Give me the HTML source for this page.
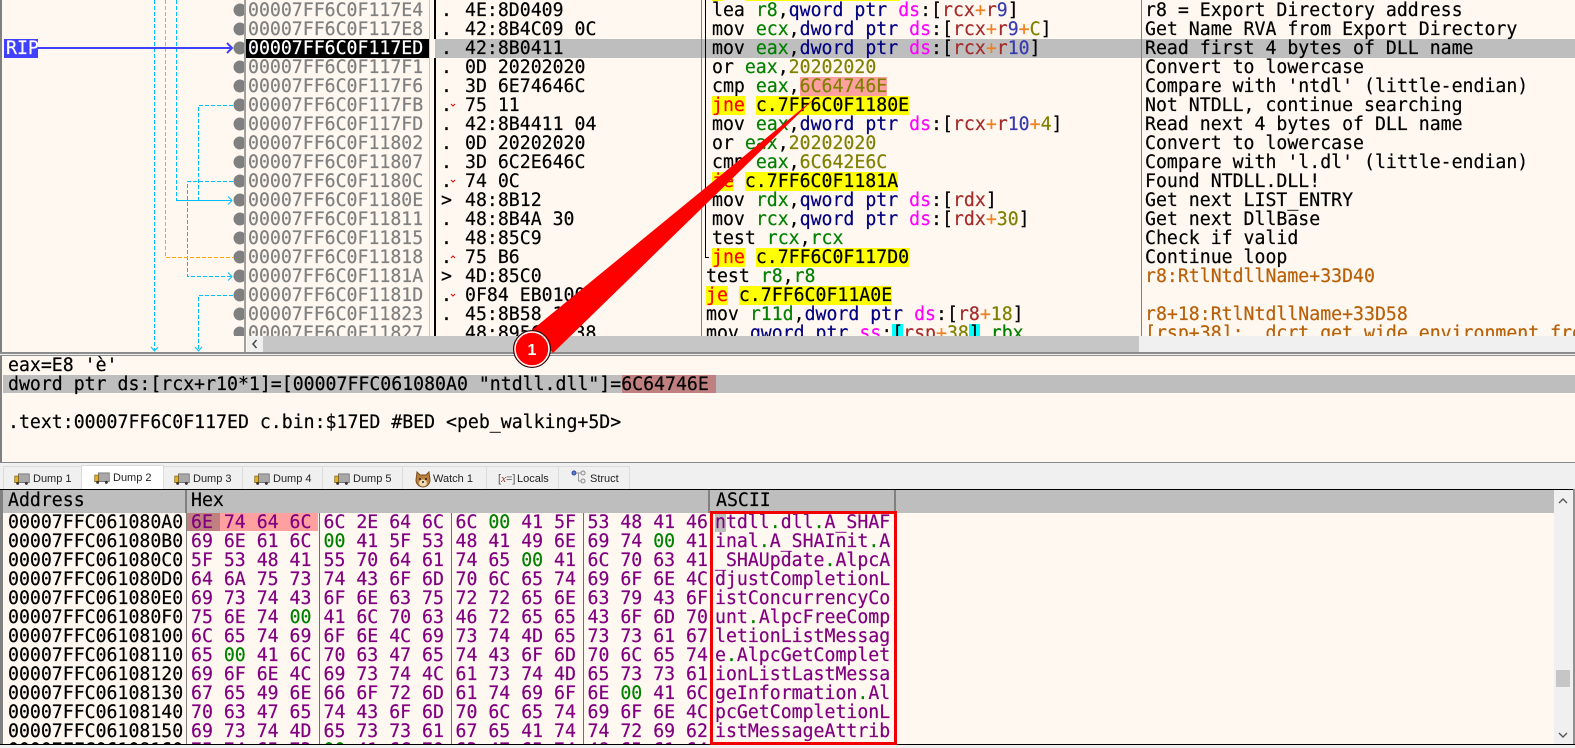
<!DOCTYPE html>
<html><head><meta charset="utf-8"><style>
html,body{margin:0;padding:0;width:1575px;height:748px;overflow:hidden;background:#FFF8F0}
#p{position:relative;width:1575px;height:748px;overflow:hidden;background:#FFF8F0;font:18.2px/19px "DejaVu Sans Mono",monospace;color:#000}
.a{position:absolute}
.col{position:absolute;white-space:normal;-webkit-text-stroke:.2px}
.col div{height:19px;line-height:19px;white-space:pre}
.g{color:#008000}.n{color:#000080}.m{color:#f0f}.b{color:#a52a2a}.o{color:#f08020}.l{color:#808000}.v{color:#3a3ab0}.r{color:#f00}
.y{display:inline-block;height:19px;background:#ff0;vertical-align:top}
.h{display:inline-block;height:19px;background:#ffa0a0;color:#808000;vertical-align:top}
.c{display:inline-block;height:19px;background:#0ff;vertical-align:top}
.t{position:absolute;top:466px;height:23px;background:#f0f0f0;border:1px solid #dcdcdc;border-bottom:0;box-sizing:border-box;font:11px/25px "Liberation Sans",sans-serif;color:#222}
.t span{position:absolute;white-space:pre}
.t svg{position:absolute;top:5px}
.p{color:#800080}.p i{color:#008000;font-style:normal}
</style></head><body><div id="p">

<!-- backgrounds -->
<div class="a" style="left:435px;top:39px;width:1140px;height:19px;background:#bebebe"></div>
<div class="a" style="left:246px;top:39px;width:183px;height:19px;background:#000"></div>
<div class="a" style="left:4px;top:39px;width:34px;height:19px;background:#4040ff"></div>
<div class="a" style="left:0;top:0;width:2px;height:353px;background:#808080"></div>
<div class="a" style="left:244px;top:0;width:2px;height:353px;background:#a0a0a0"></div>
<div class="a" style="left:429px;top:0;width:1px;height:336px;background:#c8c8c8"></div>
<div class="a" style="left:434px;top:0;width:2px;height:39px;background:#000"></div>
<div class="a" style="left:434px;top:58px;width:2px;height:278px;background:#000"></div>
<div class="a" style="left:701px;top:0;width:1px;height:336px;background:#808080"></div>
<div class="a" style="left:1141px;top:0;width:1px;height:336px;background:#808080"></div>
<div class="a" style="left:705px;top:0;width:1px;height:258px;background:#000"></div>
<div class="a" style="left:705px;top:257px;width:4px;height:1px;background:#000"></div>
<div class="a" style="left:712px;top:0;width:11px;height:1px;background:#ff0"></div>
<div class="a" style="left:745px;top:0;width:155px;height:1px;background:#ff0"></div>

<!-- upper table text -->
<div class="a" style="left:0;top:0;width:1575px;height:336px;overflow:hidden">
<div class="col" style="left:6px;top:39px;color:#fff"><div>RIP</div></div>
<div class="col" style="left:248px;top:1px;color:#808080"><div>00007FF6C0F117E4</div><div>00007FF6C0F117E8</div><div style="color:#fff">00007FF6C0F117ED</div><div>00007FF6C0F117F1</div><div>00007FF6C0F117F6</div><div>00007FF6C0F117FB</div><div>00007FF6C0F117FD</div><div>00007FF6C0F11802</div><div>00007FF6C0F11807</div><div>00007FF6C0F1180C</div><div>00007FF6C0F1180E</div><div>00007FF6C0F11811</div><div>00007FF6C0F11815</div><div>00007FF6C0F11818</div><div>00007FF6C0F1181A</div><div>00007FF6C0F1181D</div><div>00007FF6C0F11823</div><div>00007FF6C0F11827</div></div>
<div class="col" style="left:441px;top:1px"><div>.</div><div>.</div><div>.</div><div>.</div><div>.</div><div>.</div><div>.</div><div>.</div><div>.</div><div>.</div><div>&gt;</div><div>.</div><div>.</div><div>.</div><div>&gt;</div><div>.</div><div>.</div><div>.</div></div>
<div class="col" style="left:465px;top:1px"><div>4E:8D0409</div><div>42:8B4C09 0C</div><div>42:8B0411</div><div>0D 20202020</div><div>3D 6E74646C</div><div>75 11</div><div>42:8B4411 04</div><div>0D 20202020</div><div>3D 6C2E646C</div><div>74 0C</div><div>48:8B12</div><div>48:8B4A 30</div><div>48:85C9</div><div>75 B6</div><div>4D:85C0</div><div>0F84 EB010000</div><div>45:8B58 18</div><div>48:895C24 38</div></div>
<div class="col" style="left:712px;top:1px">
<div>lea <span class="g">r8</span>,<span class="n">qword ptr</span> <span class="m">ds</span>:[<span class="b">rcx</span><span class="o">+</span><span class="b">r</span><span class="v">9</span>]</div>
<div>mov <span class="g">ecx</span>,<span class="n">dword ptr</span> <span class="m">ds</span>:[<span class="b">rcx</span><span class="o">+</span><span class="b">r</span><span class="v">9</span><span class="o">+</span><span class="l">C</span>]</div>
<div>mov <span class="g">eax</span>,<span class="n">dword ptr</span> <span class="m">ds</span>:[<span class="b">rcx</span><span class="o">+</span><span class="b">r</span><span class="v">10</span>]</div>
<div>or <span class="g">eax</span>,<span class="l">20202020</span></div>
<div>cmp <span class="g">eax</span>,<span class="h">6C64746E</span></div>
<div><span class="y r">jne</span> <span class="y">c.7FF6C0F1180E</span></div>
<div>mov <span class="g">eax</span>,<span class="n">dword ptr</span> <span class="m">ds</span>:[<span class="b">rcx</span><span class="o">+</span><span class="b">r</span><span class="v">10</span><span class="o">+</span><span class="l">4</span>]</div>
<div>or <span class="g">eax</span>,<span class="l">20202020</span></div>
<div>cmp <span class="g">eax</span>,<span class="l">6C642E6C</span></div>
<div><span class="y r">je</span> <span class="y">c.7FF6C0F1181A</span></div>
<div>mov <span class="g">rdx</span>,<span class="n">qword ptr</span> <span class="m">ds</span>:[<span class="b">rdx</span>]</div>
<div>mov <span class="g">rcx</span>,<span class="n">qword ptr</span> <span class="m">ds</span>:[<span class="b">rdx</span><span class="o">+</span><span class="l">30</span>]</div>
<div>test <span class="g">rcx</span>,<span class="g">rcx</span></div>
<div><span class="y r">jne</span> <span class="y">c.7FF6C0F117D0</span></div>
</div>
<div class="col" style="left:706px;top:267px">
<div>test <span class="g">r8</span>,<span class="g">r8</span></div>
<div><span class="y r">je</span> <span class="y">c.7FF6C0F11A0E</span></div>
<div>mov <span class="g">r11d</span>,<span class="n">dword ptr</span> <span class="m">ds</span>:[<span class="b">r8</span><span class="o">+</span><span class="l">18</span>]</div>
<div>mov <span class="n">qword ptr</span> <span class="m">ss</span>:<span class="c">[</span><span class="b">rsp</span><span class="o">+</span><span class="l">38</span><span class="c">]</span>,<span class="g">rbx</span></div>
</div>
<div class="col" style="left:1145px;top:1px">
<div>r8 = Export Directory address</div>
<div>Get Name RVA from Export Directory</div>
<div>Read first 4 bytes of DLL name</div>
<div>Convert to lowercase</div>
<div>Compare with 'ntdl' (little-endian)</div>
<div>Not NTDLL, continue searching</div>
<div>Read next 4 bytes of DLL name</div>
<div>Convert to lowercase</div>
<div>Compare with 'l.dl' (little-endian)</div>
<div>Found NTDLL.DLL!</div>
<div>Get next LIST_ENTRY</div>
<div>Get next DllBase</div>
<div>Check if valid</div>
<div>Continue loop</div>
<div style="color:#b86008">r8:RtlNtdllName+33D40</div>
<div></div>
<div style="color:#b86008">r8+18:RtlNtdllName+33D58</div>
<div style="color:#b86008">[rsp+38]:__dcrt_get_wide_environment_from_os+14C</div>
</div>
</div>

<!-- graph -->
<svg class="a" style="left:0;top:0" width="460" height="356" fill="none">
<clipPath id="cg"><rect x="0" y="0" width="244" height="336"/></clipPath>
<g clip-path="url(#cg)" fill="#808080">
<circle cx="240" cy="10" r="6.5"/><circle cx="240" cy="29" r="6.5"/><circle cx="240" cy="48" r="6.5"/><circle cx="240" cy="67" r="6.5"/><circle cx="240" cy="86" r="6.5"/><circle cx="240" cy="105" r="6.5"/><circle cx="240" cy="124" r="6.5"/><circle cx="240" cy="143" r="6.5"/><circle cx="240" cy="162" r="6.5"/><circle cx="240" cy="181" r="6.5"/><circle cx="240" cy="200" r="6.5"/><circle cx="240" cy="219" r="6.5"/><circle cx="240" cy="238" r="6.5"/><circle cx="240" cy="257" r="6.5"/><circle cx="240" cy="276" r="6.5"/><circle cx="240" cy="295" r="6.5"/><circle cx="240" cy="314" r="6.5"/><circle cx="240" cy="333" r="6.5"/></g>
<g stroke="#00bfff" stroke-width="1" stroke-dasharray="4 2">
<path d="M154.5 0V350"/><path d="M176.5 0V200.5"/><path d="M233 105.5H198.5V200"/><path d="M233 181.5H187.5V276.5H231"/><path d="M233 295.5H198.500V350"/>
</g>
<path d="M165.5 0V257.5H233" stroke="#ffa500" stroke-dasharray="4 2"/>
<path d="M176 200.5H232M228 196.5l4 4-4 4M228 272.5l4 4-4 4M151 347l3.500 4 3.500-4M195 347l3.500 4 3.500-4" stroke="#00bfff"/>
<path d="M38 48H231M227 43l5 5-5 5" stroke="#4040ff" stroke-width="2"/>
<g stroke="#e00000" stroke-width="1"><path d="M451 104l2 2 2-2M451 180l2 2 2-2M451 294l2 2 2-2M451 258l2-2 2 2"/></g>
</svg>

<!-- scrollbar upper -->
<div class="a" style="left:247px;top:336px;width:1328px;height:16px;background:#f0f0f0"></div>
<div class="a" style="left:263px;top:336px;width:876px;height:16px;background:#c6c6c6"></div>
<svg class="a" style="left:250px;top:338px" width="10" height="12" fill="none"><path d="M6.5 2L3 6l3.500 4" stroke="#444" stroke-width="1.5"/></svg>
<div class="a" style="left:0;top:352px;width:1575px;height:2px;background:#8c8c8c"></div>
<div class="a" style="left:0;top:354px;width:1575px;height:1px;background:#f0f0f0"></div>
<div class="a" style="left:0;top:355px;width:1575px;height:1px;background:#909090"></div>

<!-- info panel -->
<div class="a" style="left:0;top:356px;width:2px;height:107px;background:#808080"></div>
<div class="a" style="left:3px;top:375px;width:1572px;height:18px;background:#bebebe"></div>
<div class="a" style="left:622px;top:375px;width:94px;height:18px;background:#c08080"></div>
<div class="col" style="left:8px;top:356px">
<div>eax=E8 'è'</div>
<div>dword ptr ds:[rcx+r10*1]=[00007FFC061080A0 "ntdll.dll"]=6C64746E</div>
<div></div>
<div>.text:00007FF6C0F117ED c.bin:$17ED #BED &lt;peb_walking+5D&gt;</div>
</div>

<!-- tabs -->
<div class="a" style="left:0;top:462px;width:1575px;height:27px;background:#f0f0f0"></div>
<div class="a" style="left:0;top:462px;width:1575px;height:1px;background:#888"></div>
<div class="t" style="left:3px;width:79px"><svg style="left:10px" width="16" height="14" viewBox="0 0 22 18"><rect x="6" y="2" width="15" height="12" fill="#a8a8a8" stroke="#666"/><rect x="1" y="5" width="5" height="9" fill="#e8b020" stroke="#806010"/><circle cx="5" cy="15" r="2" fill="#333"/><circle cx="17" cy="15" r="2" fill="#333"/></svg><span style="left:29px">Dump 1</span></div>
<div class="t" style="left:81px;width:83px;top:465px;height:24px;background:#fff;z-index:2"><svg style="left:12px" width="16" height="14" viewBox="0 0 22 18"><rect x="6" y="2" width="15" height="12" fill="#a8a8a8" stroke="#666"/><rect x="1" y="5" width="5" height="9" fill="#e8b020" stroke="#806010"/><circle cx="5" cy="15" r="2" fill="#333"/><circle cx="17" cy="15" r="2" fill="#333"/></svg><span style="left:31px">Dump 2</span></div>
<div class="t" style="left:163px;width:80px"><svg style="left:10px" width="16" height="14" viewBox="0 0 22 18"><rect x="6" y="2" width="15" height="12" fill="#a8a8a8" stroke="#666"/><rect x="1" y="5" width="5" height="9" fill="#e8b020" stroke="#806010"/><circle cx="5" cy="15" r="2" fill="#333"/><circle cx="17" cy="15" r="2" fill="#333"/></svg><span style="left:29px">Dump 3</span></div>
<div class="t" style="left:242px;width:81px"><svg style="left:11px" width="16" height="14" viewBox="0 0 22 18"><rect x="6" y="2" width="15" height="12" fill="#a8a8a8" stroke="#666"/><rect x="1" y="5" width="5" height="9" fill="#e8b020" stroke="#806010"/><circle cx="5" cy="15" r="2" fill="#333"/><circle cx="17" cy="15" r="2" fill="#333"/></svg><span style="left:30px">Dump 4</span></div>
<div class="t" style="left:322px;width:81px"><svg style="left:11px" width="16" height="14" viewBox="0 0 22 18"><rect x="6" y="2" width="15" height="12" fill="#a8a8a8" stroke="#666"/><rect x="1" y="5" width="5" height="9" fill="#e8b020" stroke="#806010"/><circle cx="5" cy="15" r="2" fill="#333"/><circle cx="17" cy="15" r="2" fill="#333"/></svg><span style="left:30px">Dump 5</span></div>
<div class="t" style="left:402px;width:85px"><svg style="left:11px;top:3px" width="18" height="20" viewBox="0 0 18 20"><path d="M3 2l3 3h6l3-3 1 8a7 7 0 0 1-14 0z" fill="#b8803c" stroke="#7a4e20"/><ellipse cx="9" cy="13" rx="4" ry="3.500" fill="#f0d8b0"/><circle cx="6" cy="9" r="1" fill="#222"/><circle cx="12" cy="9" r="1" fill="#222"/><circle cx="9" cy="12" r="1" fill="#222"/></svg><span style="left:30px">Watch 1</span></div>
<div class="t" style="left:486px;width:73px"><span style="left:11px;color:#555;font-size:11px">[<i style="color:#903030;font-family:'Liberation Serif',serif">x</i>=]</span><span style="left:30px">Locals</span></div>
<div class="t" style="left:558px;width:72px"><svg style="left:12px;top:3px" width="18" height="16" viewBox="0 0 18 16" fill="none"><circle cx="3" cy="3" r="2" fill="#5878d8" stroke="#384898"/><circle cx="12" cy="3" r="2" fill="#eee" stroke="#888"/><circle cx="12" cy="11" r="2" fill="#eee" stroke="#888"/><path d="M5 3h5M7.500 3v8H10" stroke="#999"/></svg><span style="left:31px">Struct</span></div>

<!-- dump -->
<div class="a" style="left:0;top:489px;width:1575px;height:1px;background:#000"></div>
<div class="a" style="left:0;top:490px;width:3px;height:254px;background:#808080"></div>
<div class="a" style="left:3px;top:490px;width:1551px;height:23px;background:#bebebe"></div>
<div class="a" style="left:186px;top:490px;width:1px;height:254px;background:#808080"></div>
<div class="a" style="left:185px;top:490px;width:2px;height:23px;background:#808080"></div>
<div class="a" style="left:708px;top:490px;width:2px;height:23px;background:#808080"></div>
<div class="a" style="left:894px;top:490px;width:2px;height:23px;background:#808080"></div>
<div class="a" style="left:319px;top:513px;width:1px;height:231px;background:#707070"></div>
<div class="a" style="left:451px;top:513px;width:1px;height:231px;background:#707070"></div>
<div class="a" style="left:583px;top:513px;width:1px;height:231px;background:#707070"></div>
<div class="a" style="left:187px;top:513px;width:131px;height:18px;background:#ffa0a0"></div>
<div class="a" style="left:187px;top:513px;width:33px;height:18px;background:#c08080"></div>
<div class="a" style="left:715px;top:513px;width:11px;height:19px;background:#bebebe"></div>
<div class="col" style="left:8px;top:490px"><div style="height:22px;line-height:22px">Address</div></div>
<div class="col" style="left:191px;top:490px"><div style="height:22px;line-height:22px">Hex</div></div>
<div class="col" style="left:716px;top:490px"><div style="height:22px;line-height:22px">ASCII</div></div>

<div class="a" style="left:0;top:513px;width:1554px;height:231px;overflow:hidden">
<div class="col" style="left:8px;top:0"><div>00007FFC061080A0</div><div>00007FFC061080B0</div><div>00007FFC061080C0</div><div>00007FFC061080D0</div><div>00007FFC061080E0</div><div>00007FFC061080F0</div><div>00007FFC06108100</div><div>00007FFC06108110</div><div>00007FFC06108120</div><div>00007FFC06108130</div><div>00007FFC06108140</div><div>00007FFC06108150</div><div>00007FFC06108160</div></div>
<div class="col p" style="left:191px;top:0"><div>6E 74 64 6C</div><div>69 6E 61 6C</div><div>5F 53 48 41</div><div>64 6A 75 73</div><div>69 73 74 43</div><div>75 6E 74 <i>00</i></div><div>6C 65 74 69</div><div>65 <i>00</i> 41 6C</div><div>69 6F 6E 4C</div><div>67 65 49 6E</div><div>70 63 47 65</div><div>69 73 74 4D</div><div>75 74 65 73</div></div>
<div class="col p" style="left:323.500px;top:0"><div>6C 2E 64 6C</div><div><i>00</i> 41 5F 53</div><div>55 70 64 61</div><div>74 43 6F 6D</div><div>6F 6E 63 75</div><div>41 6C 70 63</div><div>6F 6E 4C 69</div><div>70 63 47 65</div><div>69 73 74 4C</div><div>66 6F 72 6D</div><div>74 43 6F 6D</div><div>65 73 73 61</div><div><i>00</i> 41 6C 70</div></div>
<div class="col p" style="left:455.500px;top:0"><div>6C <i>00</i> 41 5F</div><div>48 41 49 6E</div><div>74 65 <i>00</i> 41</div><div>70 6C 65 74</div><div>72 72 65 6E</div><div>46 72 65 65</div><div>73 74 4D 65</div><div>74 43 6F 6D</div><div>61 73 74 4D</div><div>61 74 69 6F</div><div>70 6C 65 74</div><div>67 65 41 74</div><div>63 47 65 74</div></div>
<div class="col p" style="left:587.500px;top:0"><div>53 48 41 46</div><div>69 74 <i>00</i> 41</div><div>6C 70 63 41</div><div>69 6F 6E 4C</div><div>63 79 43 6F</div><div>43 6F 6D 70</div><div>73 73 61 67</div><div>70 6C 65 74</div><div>65 73 73 61</div><div>6E <i>00</i> 41 6C</div><div>69 6F 6E 4C</div><div>74 72 69 62</div><div>48 65 61 64</div></div>
<div class="col p" style="left:715px;top:0"><div>ntdll<i>.</i>dll<i>.</i>A_SHAF</div><div>inal<i>.</i>A_SHAInit<i>.</i>A</div><div>_SHAUpdate<i>.</i>AlpcA</div><div>djustCompletionL</div><div>istConcurrencyCo</div><div>unt<i>.</i>AlpcFreeComp</div><div>letionListMessag</div><div>e<i>.</i>AlpcGetComplet</div><div>ionListLastMessa</div><div>geInformation<i>.</i>Al</div><div>pcGetCompletionL</div><div>istMessageAttrib</div></div>
</div>

<!-- dump scrollbar -->
<div class="a" style="left:1554px;top:490px;width:19px;height:254px;background:#f0f0f0"></div>
<div class="a" style="left:1556px;top:670px;width:14px;height:17px;background:#c6c6c6"></div>
<svg class="a" style="left:1556px;top:494px" width="14" height="14" fill="none"><path d="M3 9l4-4 4 4" stroke="#555" stroke-width="1.400"/></svg>
<svg class="a" style="left:1556px;top:728px" width="14" height="14" fill="none"><path d="M3 5l4 4 4-4" stroke="#555" stroke-width="1.400"/></svg>
<div class="a" style="left:1573px;top:489px;width:2px;height:256px;background:#909090"></div>
<div class="a" style="left:0;top:744px;width:1575px;height:1px;background:#000"></div>
<div class="a" style="left:0;top:745px;width:1575px;height:3px;background:#f0f0f0"></div>

<!-- annotations -->
<div class="a" style="left:710px;top:511px;width:181px;height:228px;border:3px solid #f20000"></div>
<svg class="a" style="left:0;top:0" width="1575" height="748">
<path d="M815 98L532 330L553 353Z" fill="#f00"/>
<circle cx="532" cy="349" r="18.500" fill="#f00" stroke="#111" stroke-width="1"/>
<circle cx="532" cy="349" r="17" fill="none" stroke="#fff" stroke-width="1.500"/>
<text x="532" y="355" text-anchor="middle" font-family="Liberation Sans, sans-serif" font-weight="bold" font-size="16" fill="#fff">1</text>
</svg>
</div></body></html>
